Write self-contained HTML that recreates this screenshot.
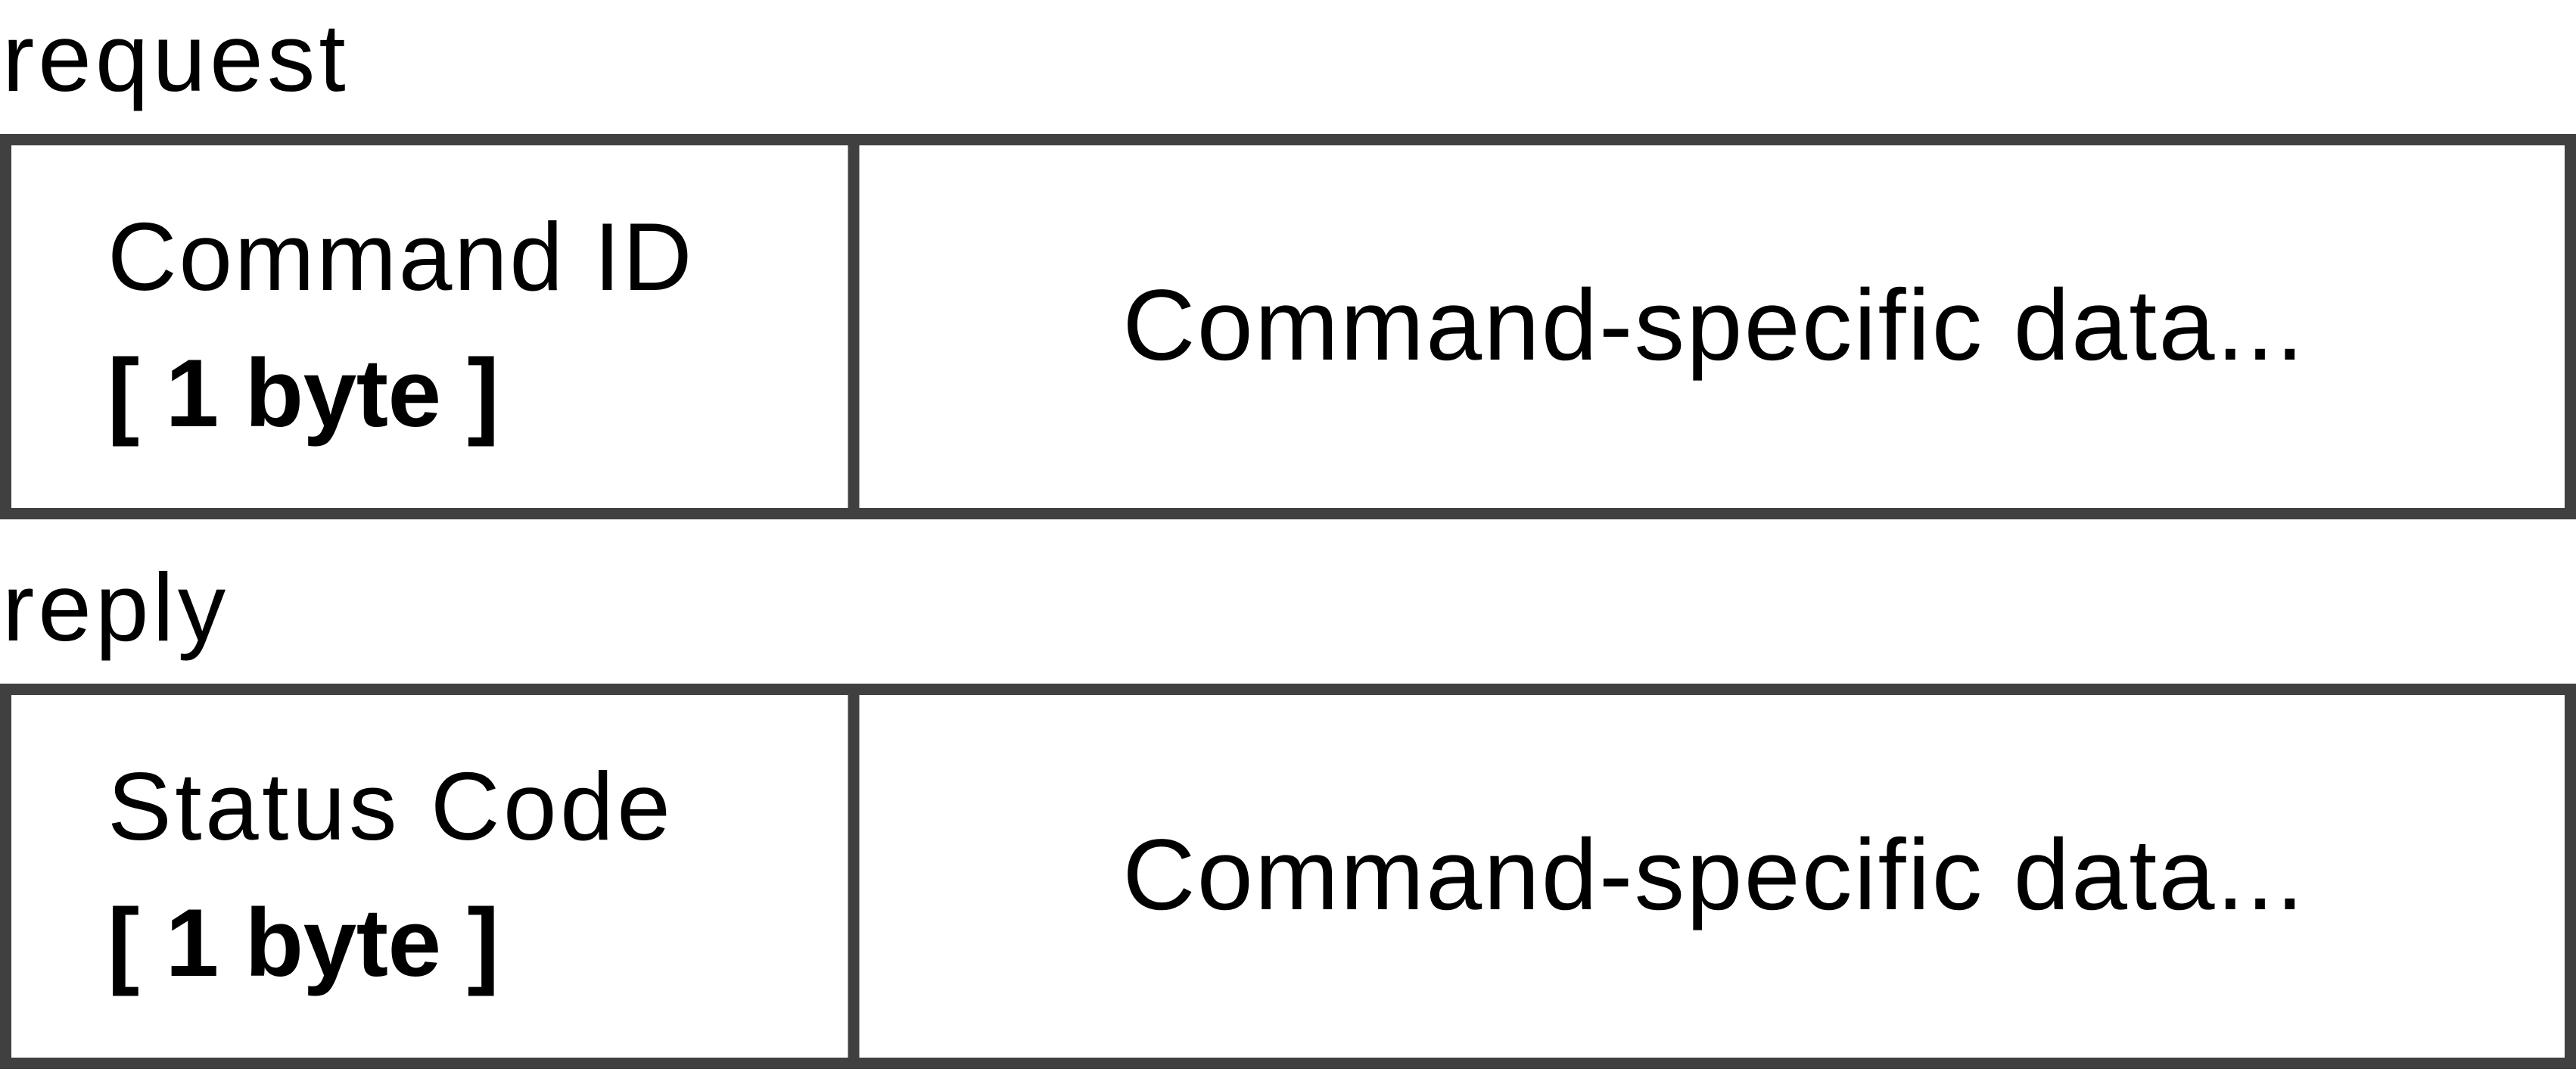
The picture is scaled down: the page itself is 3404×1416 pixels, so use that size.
<!DOCTYPE html>
<html><head><meta charset="utf-8"><style>
html,body{margin:0;padding:0;background:#fff;}
svg{display:block;}
text{font-family:"Liberation Sans",sans-serif;fill:#000;}
</style></head><body>
<svg width="3404" height="1416" viewBox="0 0 3404 1416" xmlns="http://www.w3.org/2000/svg">
<rect x="0" y="0" width="3404" height="1416" fill="#fff"/>
<g fill="none" stroke="#404040" stroke-width="15">
<rect x="7.5" y="184.5" width="3389" height="494"/>
<line x1="1128" y1="184" x2="1128" y2="680"/>
<rect x="7.5" y="910.5" width="3389" height="494"/>
<line x1="1128" y1="910" x2="1128" y2="1406"/>
</g>
<text x="3" y="120" font-size="127" letter-spacing="5">request</text>
<text x="142" y="383" font-size="127" letter-spacing="2.7">Command ID</text>
<text x="142" y="563" font-size="127" font-weight="bold" letter-spacing="-0.5">[ 1 byte ]</text>
<text x="2265" y="475" font-size="133" text-anchor="middle" letter-spacing="2.3">Command-specific data...</text>
<text x="3" y="846" font-size="127" letter-spacing="5">reply</text>
<text x="142" y="1109" font-size="127" letter-spacing="4.5">Status Code</text>
<text x="142" y="1289" font-size="127" font-weight="bold" letter-spacing="-0.5">[ 1 byte ]</text>
<text x="2265" y="1201" font-size="133" text-anchor="middle" letter-spacing="2.3">Command-specific data...</text>
</svg>
</body></html>
